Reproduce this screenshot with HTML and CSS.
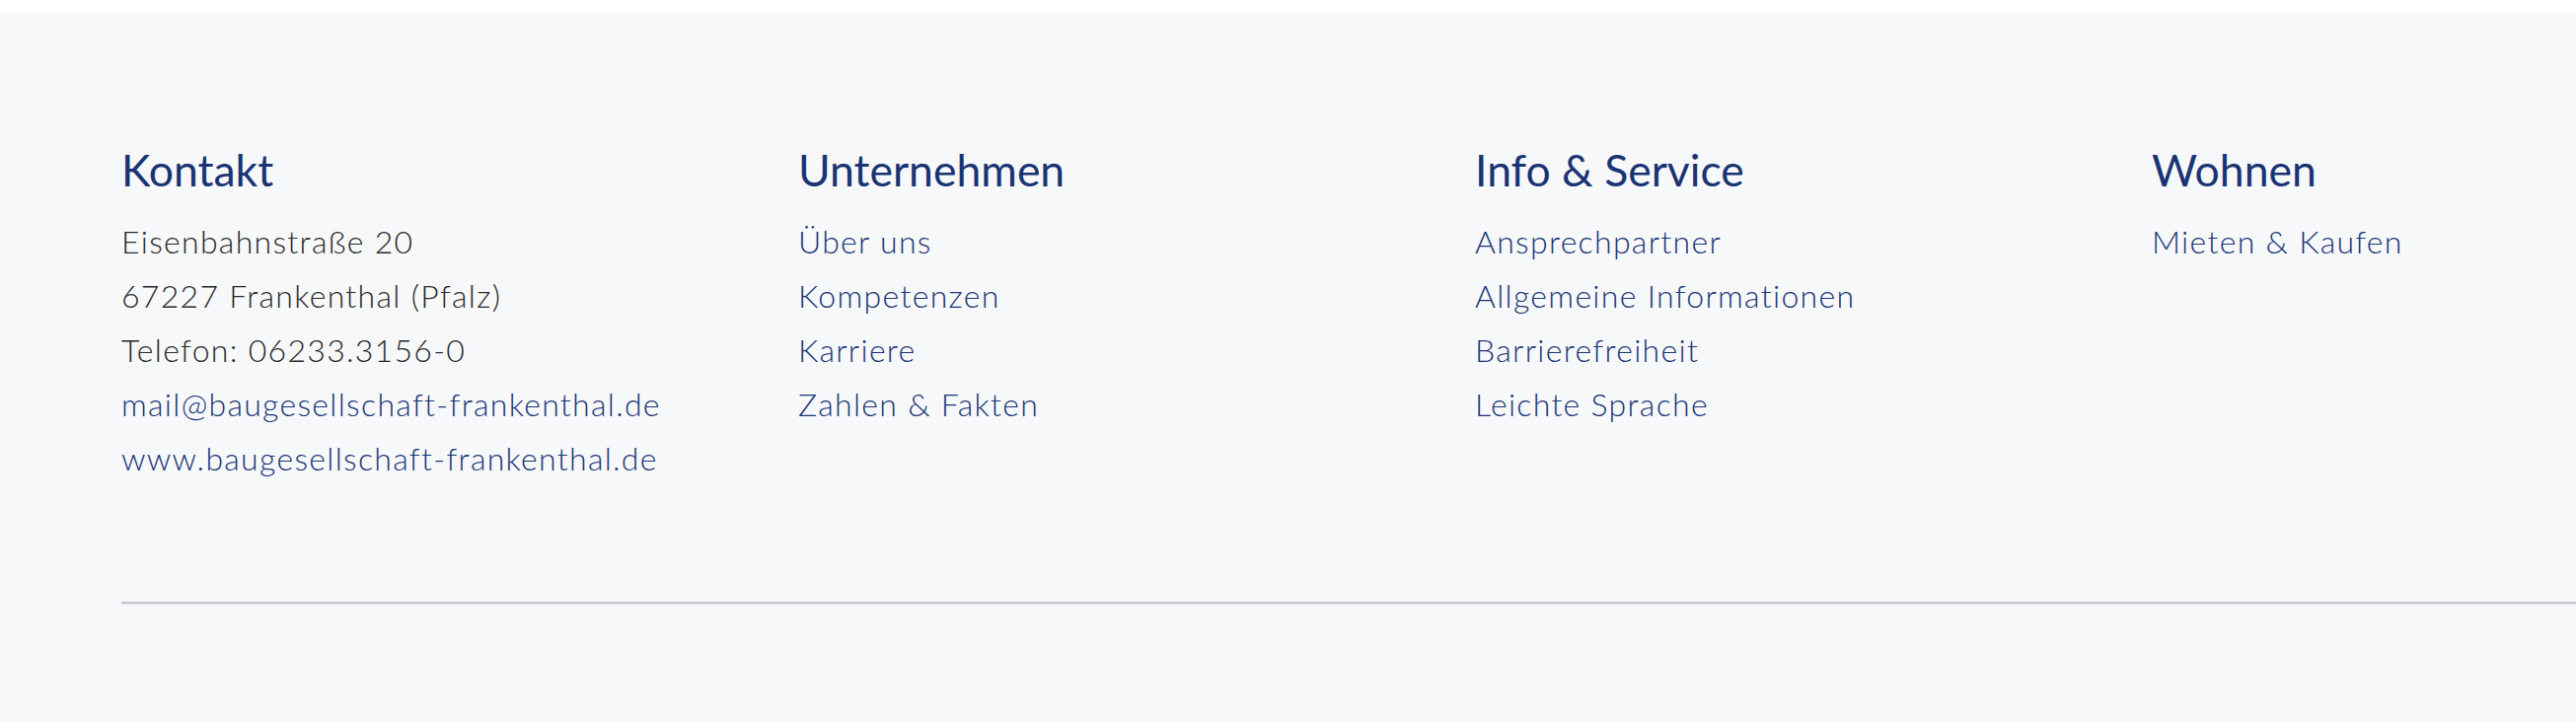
FILE: index.html
```html
<!DOCTYPE html>
<html lang="de">
<head>
    <meta charset="UTF-8">
    <meta name="viewport" content="width=device-width, initial-scale=1.0">
    <title>Footer - Baugesellschaft Frankenthal</title>
    <link rel="stylesheet" href="styles.css">
</head>
<body>
    <footer class="site-footer">
        <div class="footer-columns">
            <div class="footer-col">
                <h3>Kontakt</h3>
                <ul>
                    <li>Eisenbahnstraße 20</li>
                    <li>67227 Frankenthal (Pfalz)</li>
                    <li>Telefon: 06233.3156-0</li>
                    <li><a href="#">mail@baugesellschaft-frankenthal.de</a></li>
                    <li><a href="#">www.baugesellschaft-frankenthal.de</a></li>
                </ul>
            </div>
            <div class="footer-col">
                <h3>Unternehmen</h3>
                <ul>
                    <li><a href="#">Über uns</a></li>
                    <li><a href="#">Kompetenzen</a></li>
                    <li><a href="#">Karriere</a></li>
                    <li><a href="#">Zahlen &amp; Fakten</a></li>
                </ul>
            </div>
            <div class="footer-col">
                <h3>Info &amp; Service</h3>
                <ul>
                    <li><a href="#">Ansprechpartner</a></li>
                    <li><a href="#">Allgemeine Informationen</a></li>
                    <li><a href="#">Barrierefreiheit</a></li>
                    <li><a href="#">Leichte Sprache</a></li>
                </ul>
            </div>
            <div class="footer-col">
                <h3>Wohnen</h3>
                <ul>
                    <li><a href="#">Mieten &amp; Kaufen</a></li>
                </ul>
            </div>
        </div>
        <div class="footer-divider"></div>
    </footer>
</body>
</html>
```

FILE: styles.css
```css
:root {
    --footer-bg: #f7f8fa;
    --heading-color: #1a3473;
    --link-color: #1a3676;
    --text-color: #2a2a2a;
    --divider: #c6c7ca;
}

body {
    margin: 0;
    background: white;
    font-family: Lato, 'Open Sans', sans-serif;
    overflow: hidden;
}

.site-footer {
    margin-top: 13px;
    background: var(--footer-bg);
    padding: 131px 0 0 123px;
    min-height: 718px;
    box-sizing: border-box;
}

.footer-columns {
    display: grid;
    grid-template-columns: repeat(3, 686px) 1fr;
}

.footer-col h3 {
    margin: 0 0 18px;
    font-size: 44.5px;
    line-height: 55px;
    font-weight: 400;
    color: var(--heading-color);
}

.footer-col ul {
    list-style: none;
    margin: 0;
    padding: 0;
}

.footer-col li {
    font-size: 32px;
    line-height: 55px;
    font-weight: 300;
    letter-spacing: 1.3px;
    color: var(--text-color);
    white-space: nowrap;
}

.footer-col a {
    color: var(--link-color);
    text-decoration: none;
}

.footer-divider {
    margin-top: 118px;
    height: 2px;
    background: var(--divider);
    border-bottom: 1px solid #e3e4e7;
}
```
